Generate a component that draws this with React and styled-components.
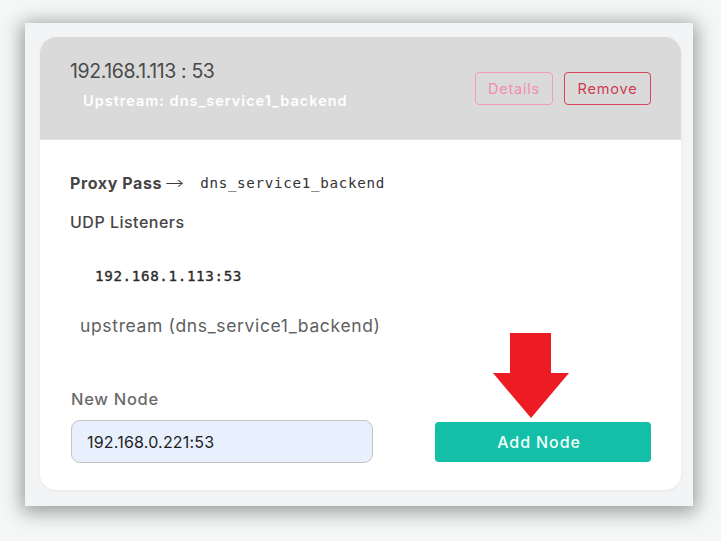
import React from "react";
import styled, { createGlobalStyle } from "styled-components";

const Global = createGlobalStyle`
  html, body {
    margin: 0;
    padding: 0;
    background: #f4f7f6;
  }
  body {
    font-family: "Inter", "Noto Sans", sans-serif;
    -webkit-font-smoothing: antialiased;
  }
`;

const Page = styled.div`
  width: 721px;
  height: 541px;
  padding: 23px 0 0 25px;
  box-sizing: border-box;
`;

const Frame = styled.div`
  width: 668px;
  height: 483px;
  box-sizing: border-box;
  background: #f3f4f6;
  padding: 14px 12px 0 15px;
  box-shadow: 0 3px 18px 3px rgba(0, 0, 0, 0.38);
`;

const Card = styled.section`
  position: relative;
  background: #ffffff;
  border-radius: 16px;
  overflow: hidden;
  box-shadow: 0 1px 3px rgba(0, 0, 0, 0.06);
`;

const Header = styled.header`
  height: 103px;
  box-sizing: border-box;
  background: #dadada;
  border-bottom: 1px solid #e2e2e2;
  padding: 0 30px 0 30px;
  display: flex;
  align-items: center;
  justify-content: space-between;
`;

const TitleBlock = styled.div`
  display: flex;
  flex-direction: column;
  gap: 9px;
  padding-bottom: 8px;
`;

const Title = styled.h2`
  margin: 0;
  font-size: 19.5px;
  font-weight: 400;
  color: #4a4a4a;
  letter-spacing: -0.4px;
  line-height: 24px;
`;

const Subtitle = styled.div`
  padding-left: 13px;
  font-size: 14.5px;
  font-weight: 600;
  color: #ffffff;
  line-height: 18px;
  letter-spacing: 1px;
`;

const Actions = styled.div`
  display: flex;
  gap: 11px;
  padding-top: 1px;
`;

const OutlineButton = styled.button`
  width: ${(p) => p.$width}px;
  height: 33px;
  padding: 0;
  border-radius: 4px;
  background: transparent;
  font-family: "Inter", "Noto Sans", sans-serif;
  font-size: 14.5px;
  letter-spacing: 0.8px;
  border: 1.5px solid ${(p) => p.$border};
  color: ${(p) => p.$color};
`;

const Body = styled.div`
  padding: 31px 30px 27px 30px;
  display: flex;
  flex-direction: column;
`;

const ProxyRow = styled.div`
  display: flex;
  align-items: center;
  line-height: 24px;
  color: #454545;
`;

const ProxyLabel = styled.span`
  font-size: 16px;
  font-weight: 700;
  letter-spacing: 0.6px;
`;

const Arrow = styled.span`
  font-family: "DejaVu Sans", sans-serif;
  font-size: 18px;
  font-weight: 300;
  margin: 0 18px 0 5px;
  transform: scaleX(1.25);
  color: #3d3d3d;
`;

const Mono = styled.span`
  font-family: "DejaVu Sans Mono", "Liberation Mono", monospace;
  font-size: 14.2px;
  color: #333;
  letter-spacing: 0.7px;
`;

const SectionLabel = styled.div`
  margin-top: 15px;
  line-height: 24px;
  font-size: 16px;
  font-weight: 500;
  color: #454545;
  letter-spacing: 0.5px;
`;

const Listener = styled.div`
  margin-top: 30px;
  padding-left: 25px;
  line-height: 24px;
  font-family: "DejaVu Sans Mono", "Liberation Mono", monospace;
  font-size: 14.2px;
  font-weight: 400;
  -webkit-text-stroke: 0.35px #2b2b2b;
  color: #2b2b2b;
  letter-spacing: 0.65px;
`;

const Upstream = styled.div`
  margin-top: 26px;
  padding-left: 10px;
  line-height: 24px;
  font-size: 17.5px;
  color: #5f5f5f;
  letter-spacing: 0.65px;
`;

const FieldLabel = styled.label`
  margin-top: 49px;
  padding-left: 1px;
  line-height: 24px;
  font-size: 16.5px;
  font-weight: 500;
  color: #6b6b6b;
  letter-spacing: 0.7px;
`;

const FormRow = styled.div`
  margin-top: 9px;
  display: grid;
  grid-template-columns: 302px 216px;
  column-gap: 62px;
  align-items: center;
  padding-left: 1px;
`;

const NodeInput = styled.input`
  box-sizing: border-box;
  width: 100%;
  height: 43px;
  border: 1px solid #c4c4c4;
  border-radius: 9px;
  background: #e8f0fe;
  padding: 0 15px;
  font-family: "Inter", "Noto Sans", sans-serif;
  font-size: 16px;
  color: #1e1e1e;
  letter-spacing: 0.2px;
  outline: none;
`;

const AddButton = styled.button`
  height: 40px;
  border: none;
  border-radius: 4px;
  padding: 0 8px 0 0;
  background: #13bfa6;
  color: #f4fffc;
  font-family: "Inter", "Noto Sans", sans-serif;
  font-size: 16px;
  font-weight: 500;
  letter-spacing: 0.9px;
`;

const Pointer = styled.svg`
  position: absolute;
  left: 452px;
  top: 296px;
`;

export default function App() {
  return (
    <>
      <Global />
      <Page>
        <Frame>
          <Card>
            <Header>
              <TitleBlock>
                <Title>192.168.1.113 : 53</Title>
                <Subtitle>Upstream: dns_service1_backend</Subtitle>
              </TitleBlock>
              <Actions>
                <OutlineButton $width={78} $border="#f39bbb" $color="#f08db0">
                  Details
                </OutlineButton>
                <OutlineButton $width={87} $border="#d6435a" $color="#cf3a50">
                  Remove
                </OutlineButton>
              </Actions>
            </Header>
            <Body>
              <ProxyRow>
                <ProxyLabel>Proxy Pass</ProxyLabel>
                <Arrow>→</Arrow>
                <Mono>dns_service1_backend</Mono>
              </ProxyRow>
              <SectionLabel>UDP Listeners</SectionLabel>
              <Listener>192.168.1.113:53</Listener>
              <Upstream>upstream (dns_service1_backend)</Upstream>
              <FieldLabel htmlFor="new-node">New Node</FieldLabel>
              <FormRow>
                <NodeInput id="new-node" defaultValue="192.168.0.221:53" />
                <AddButton>Add Node</AddButton>
              </FormRow>
            </Body>
            <Pointer width="78" height="86" viewBox="0 0 78 86">
              <path d="M18 0 H59 V40 H77 L39 85 L1 40 H18 Z" fill="#ed1c24" />
            </Pointer>
          </Card>
        </Frame>
      </Page>
    </>
  );
}
